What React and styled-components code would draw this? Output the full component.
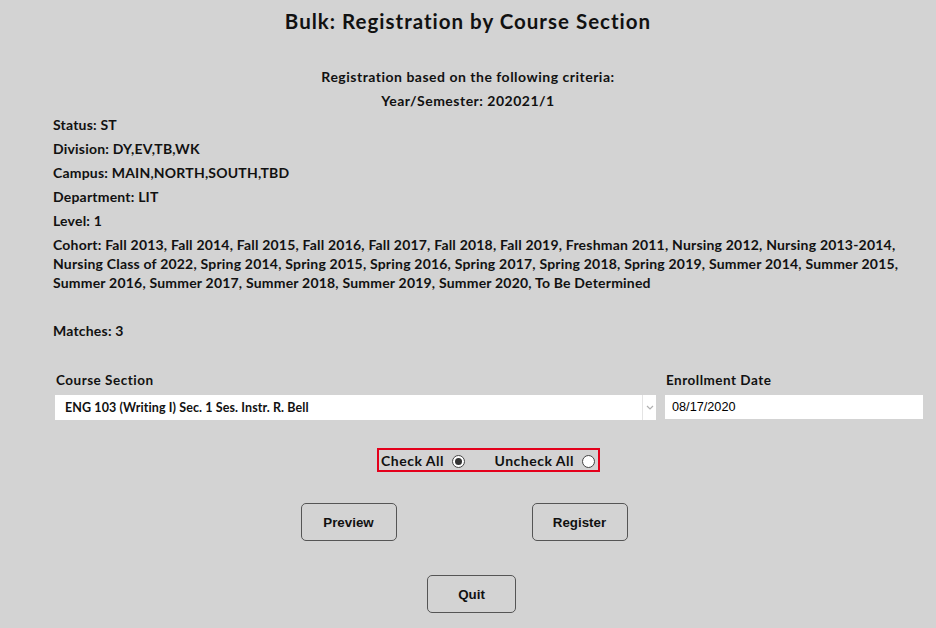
import React, { useState } from "react";
import styled, { createGlobalStyle } from "styled-components";

const Global = createGlobalStyle`
  html, body { margin: 0; padding: 0; background: #d3d3d3; }
  body { font-family: Lato, "Open Sans", sans-serif; color: #111; }
  * { box-sizing: border-box; }
`;

const Page = styled.div`
  width: 936px;
  min-height: 628px;
  background: #d3d3d3;
  padding-top: 8px;
`;

const Title = styled.h1`
  margin: 0;
  text-align: center;
  font-size: 20.5px;
  letter-spacing: 1px;
  line-height: 26px;
  font-weight: 700;
`;

const Criteria = styled.div`
  margin-top: 31px;
  text-align: center;
  font-size: 14px;
  letter-spacing: 0.5px;
  font-weight: 700;
  line-height: 24px;
`;

const Details = styled.div`
  margin-top: 2px;
  padding: 0 16px 0 53px;
  display: flex;
  flex-direction: column;
  gap: 5px;
  font-size: 14px;
  letter-spacing: 0.2px;
  font-weight: 700;
  line-height: 19px;
`;

const Line = styled.div`
  margin-top: ${(p) => p.$gap || 0}px;
`;

const CohortItem = styled.span`
  white-space: nowrap;
`;

const FormRow = styled.div`
  margin-top: 32px;
  padding: 0 13px 0 55px;
  display: grid;
  grid-template-columns: 601px 1fr;
  column-gap: 9px;
  row-gap: 7px;
`;

const Label = styled.div`
  font-size: 13.5px;
  letter-spacing: 0.5px;
  font-weight: 700;
  line-height: 16px;
  padding-left: 1px;
`;

const SelectBox = styled.div`
  height: 25px;
  background: #fff;
  display: flex;
  align-items: center;
  font-size: 12.5px;
  letter-spacing: 0.1px;
  font-weight: 700;
`;

const SelectText = styled.span`
  flex: 1;
  padding-left: 10px;
`;

const SelectArrow = styled.span`
  width: 14px;
  height: 100%;
  border-left: 1px solid #e4e4e4;
  display: flex;
  align-items: center;
  justify-content: center;
`;

const DateInput = styled.div`
  height: 24px;
  background: #fff;
  display: flex;
  align-items: center;
  padding-left: 7px;
  font-family: "Liberation Sans", Arial, sans-serif;
  font-size: 12.7px;
  font-weight: 500;
  color: #000;
`;

const RadioRow = styled.div`
  margin-top: 28px;
  display: flex;
  justify-content: center;
  padding-left: 41px;
`;

const RadioGroup = styled.div`
  width: 223px;
  height: 24px;
  border: 2px solid #e4001b;
  display: flex;
  align-items: center;
  justify-content: space-between;
  padding: 0 3px 0 2px;
`;

const RadioLabel = styled.label`
  display: flex;
  align-items: center;
  gap: 8px;
  font-size: 14px;
  letter-spacing: 0.5px;
  font-weight: 700;
  cursor: pointer;
`;

const RadioDot = styled.span`
  width: 13px;
  height: 13px;
  border-radius: 50%;
  border: 1px solid #444;
  background: #fff;
  display: inline-flex;
  align-items: center;
  justify-content: center;
  margin-top: 2px;
  &::after {
    content: "";
    width: 7px;
    height: 7px;
    border-radius: 50%;
    background: ${(p) => (p.$on ? "#333" : "transparent")};
  }
`;

const ButtonRow = styled.div`
  margin-top: ${(p) => p.$top}px;
  display: flex;
  justify-content: center;
  gap: ${(p) => p.$gap || 0}px;
  padding-left: ${(p) => p.$padL || 0}px;
  padding-right: ${(p) => p.$padR || 0}px;
`;

const Button = styled.button`
  width: ${(p) => p.$w}px;
  height: 38px;
  border: 1px solid #555;
  border-radius: 5px;
  background: #d3d3d3;
  font-family: "Liberation Sans", Arial, sans-serif;
  font-size: 13.33px;
  font-weight: 700;
  color: #111;
  cursor: pointer;
`;

const cohorts = [
  "Fall 2013", "Fall 2014", "Fall 2015", "Fall 2016", "Fall 2017", "Fall 2018",
  "Fall 2019", "Freshman 2011", "Nursing 2012", "Nursing 2013-2014",
  "Nursing Class of 2022", "Spring 2014", "Spring 2015", "Spring 2016",
  "Spring 2017", "Spring 2018", "Spring 2019", "Summer 2014", "Summer 2015",
  "Summer 2016", "Summer 2017", "Summer 2018", "Summer 2019", "Summer 2020",
  "To Be Determined",
];

export default function App() {
  const [checked, setChecked] = useState(true);
  return (
    <Page>
      <Global />
      <Title>Bulk: Registration by Course Section</Title>
      <Criteria>
        <div>Registration based on the following criteria:</div>
        <div>Year/Semester: 202021/1</div>
      </Criteria>
      <Details>
        <Line>Status: ST</Line>
        <Line>Division: DY,EV,TB,WK</Line>
        <Line>Campus: MAIN,NORTH,SOUTH,TBD</Line>
        <Line>Department: LIT</Line>
        <Line>Level: 1</Line>
        <Line>
          Cohort:{" "}
          {cohorts.map((c, i) => (
            <React.Fragment key={c}>
              <CohortItem>{i < cohorts.length - 1 ? `${c},` : c}</CohortItem>
              {i < cohorts.length - 1 ? " " : ""}
            </React.Fragment>
          ))}
        </Line>
        <Line $gap={24}>Matches: 3</Line>
      </Details>
      <FormRow>
        <Label>Course Section</Label>
        <Label>Enrollment Date</Label>
        <SelectBox>
          <SelectText>ENG 103 (Writing I) Sec. 1 Ses. Instr. R. Bell</SelectText>
          <SelectArrow>
            <svg width="8" height="5" viewBox="0 0 8 5">
              <path d="M1 1l3 3 3-3" fill="none" stroke="#b0b0b0" strokeWidth="1.2" />
            </svg>
          </SelectArrow>
        </SelectBox>
        <DateInput>08/17/2020</DateInput>
      </FormRow>
      <RadioRow>
        <RadioGroup>
          <RadioLabel onClick={() => setChecked(true)}>
            Check All <RadioDot $on={checked} />
          </RadioLabel>
          <RadioLabel onClick={() => setChecked(false)}>
            Uncheck All <RadioDot $on={!checked} />
          </RadioLabel>
        </RadioGroup>
      </RadioRow>
      <ButtonRow $top={31} $gap={135} $padR={8}>
        <Button $w={96}>Preview</Button>
        <Button $w={96}>Register</Button>
      </ButtonRow>
      <ButtonRow $top={34} $padL={7}>
        <Button $w={89}>Quit</Button>
      </ButtonRow>
    </Page>
  );
}
